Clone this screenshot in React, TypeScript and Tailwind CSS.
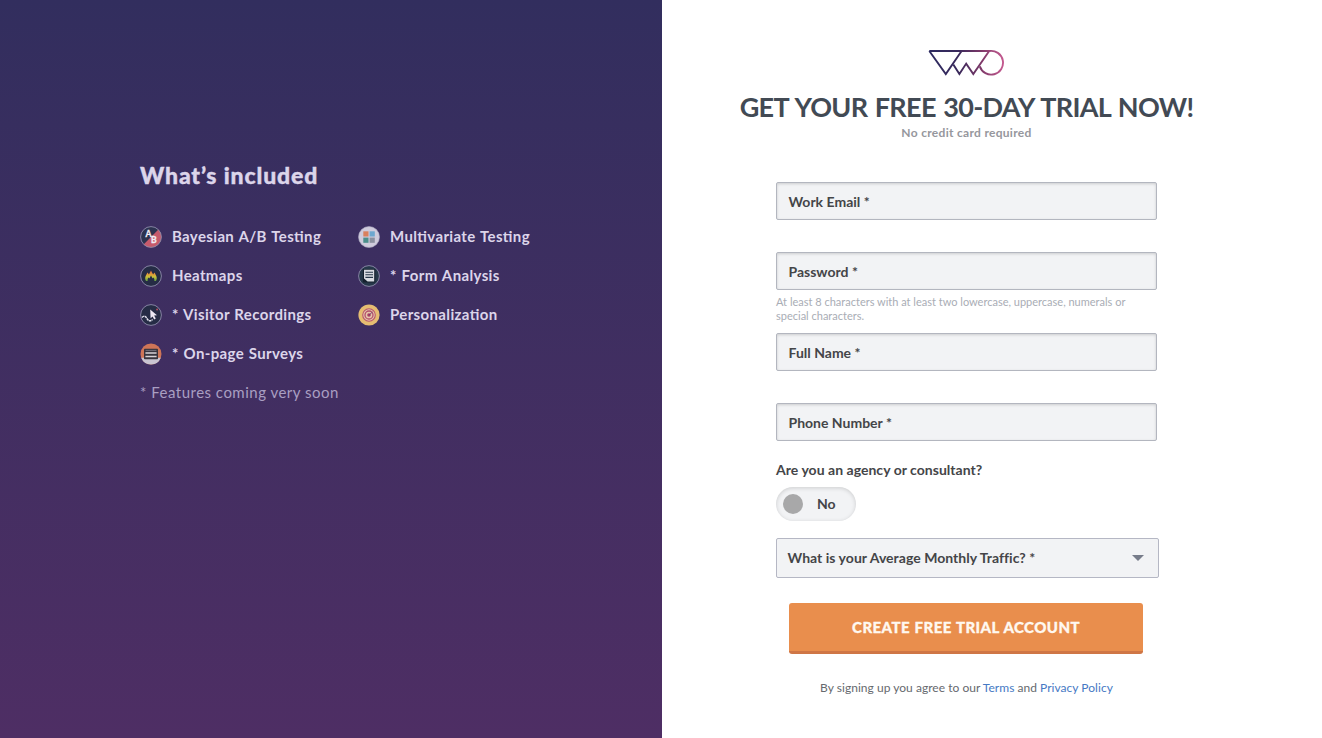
import type { ReactNode } from "react";

type FeatureProps = {
  icon: ReactNode;
  label: string;
};

const rim = "#8f8cab";

function AbIcon() {
  return (
    <svg viewBox="0 0 22 22" className="h-[22px] w-[22px] shrink-0">
      <circle cx="11" cy="11" r="10.4" fill="#2c3350" />
      <path d="M18.4 3.6A10.4 10.4 0 0 1 3.6 18.4Z" fill="#c65a6c" />
      <circle cx="11" cy="11" r="10.4" fill="none" stroke={rim} strokeWidth="0.9" />
      <text x="5.4" y="11" fontSize="8.6" fontWeight="700" fill="#f1eef7" stroke="#f1eef7" strokeWidth="0.3" fontFamily="Lato, sans-serif">
        A
      </text>
      <text x="10.9" y="16.5" fontSize="8.6" fontWeight="700" fill="#f1eef7" stroke="#f1eef7" strokeWidth="0.3" fontFamily="Lato, sans-serif">
        B
      </text>
    </svg>
  );
}

function HeatmapIcon() {
  return (
    <svg viewBox="0 0 22 22" className="h-[22px] w-[22px] shrink-0">
      <defs>
        <linearGradient id="flame" x1="0" y1="5.5" x2="0" y2="16" gradientUnits="userSpaceOnUse">
          <stop offset="0" stopColor="#cf5f45" />
          <stop offset="0.35" stopColor="#e39a38" />
          <stop offset="0.6" stopColor="#c9c23c" />
          <stop offset="1" stopColor="#5f9c45" />
        </linearGradient>
      </defs>
      <circle cx="11" cy="11" r="10.4" fill="#252c45" stroke={rim} strokeWidth="0.9" />
      <path
        d="M6 16C4.2 13 5.8 10.6 7.6 7.6L8.9 9.6 11 5.4 13.1 9.6 14.4 7.6C16.2 10.6 17.8 13 16 16H14.3C14.6 14.4 14.2 13.3 13.4 12.4L12.6 13.6 11 10.6 9.4 13.6 8.6 12.4C7.8 13.3 7.4 14.4 7.7 16Z"
        fill="url(#flame)"
      />
    </svg>
  );
}

function RecordingIcon() {
  return (
    <svg viewBox="0 0 22 22" className="h-[22px] w-[22px] shrink-0">
      <circle cx="11" cy="11" r="10.4" fill="#252c45" stroke={rim} strokeWidth="0.9" />
      <path
        d="M2 13.5C4 11.3 5.8 12 6.8 14.2 8.2 17.3 10.5 17.5 12.6 15.4"
        fill="none"
        stroke="#e4e2ee"
        strokeWidth="1.4"
        strokeDasharray="2.6 0.5"
      />
      <path d="M10.2 5.4 17 11.2 14.1 11.6 15.8 14.6 14.2 15.4 12.6 12.4 10.6 14.3Z" fill="#ebe8f3" />
      <circle cx="17.1" cy="5.4" r="1" fill="#b34b5f" />
    </svg>
  );
}

function SurveyIcon() {
  return (
    <svg viewBox="0 0 22 22" className="h-[22px] w-[22px] shrink-0">
      <circle cx="11" cy="11" r="10.5" fill="#ce7557" />
      <path d="M1.2 14.8H20.8A10.5 10.5 0 0 1 1.2 14.8Z" fill="#c9c4d1" />
      <rect x="4" y="5.8" width="14" height="10.4" rx="0.8" fill="#37343d" />
      <path d="M5.6 7.4H16.4" stroke="#8d8890" strokeWidth="0.7" />
      <path d="M5.4 10.1H16.6M5.4 13.6H16.6" stroke="#d8d2d6" strokeWidth="1.5" />
    </svg>
  );
}

function MultivariateIcon() {
  return (
    <svg viewBox="0 0 22 22" className="h-[22px] w-[22px] shrink-0">
      <circle cx="11" cy="11" r="10.5" fill="#cfcbdc" stroke="#aaa6c0" strokeWidth="0.6" />
      <rect x="5.3" y="5.3" width="5.2" height="5.2" fill="#d9805e" />
      <rect x="11.6" y="5.3" width="5.2" height="5.2" fill="#6da7cf" />
      <rect x="5.3" y="11.6" width="5.2" height="5.2" fill="#4b8f8c" />
      <rect x="11.6" y="11.6" width="5.2" height="5.2" fill="#8b909f" />
    </svg>
  );
}

function FormIcon() {
  return (
    <svg viewBox="0 0 22 22" className="h-[22px] w-[22px] shrink-0">
      <circle cx="11" cy="11" r="10.4" fill="#26384a" stroke={rim} strokeWidth="0.9" />
      <rect x="4.9" y="3.9" width="12.4" height="13.6" rx="0.8" fill="#14202d" />
      <path d="M6 4.8H16.2V16.6H9.6L6 13.6Z" fill="#d8dbe2" />
      <path d="M7.4 7.2H15M7.4 9.8H15M7.4 12.4H15" stroke="#26384a" strokeWidth="1.1" />
    </svg>
  );
}

function TargetIcon() {
  return (
    <svg viewBox="0 0 22 22" className="h-[22px] w-[22px] shrink-0">
      <circle cx="11" cy="11" r="10.6" fill="#e6bd72" />
      <circle cx="11" cy="11" r="6.3" fill="#e6c6ab" stroke="#b9566c" strokeWidth="1.1" />
      <circle cx="11" cy="11" r="4" fill="none" stroke="#b54f6a" strokeWidth="1.3" />
      <circle cx="11" cy="11" r="1.8" fill="#a83e63" />
      <path d="M11 11 14.5 8" stroke="#6b3f68" strokeWidth="0.8" />
    </svg>
  );
}

function Logo() {
  return (
    <svg viewBox="0 0 76 28" className="mr-px h-7 w-[76px]" fill="none">
      <defs>
        <linearGradient id="brand" x1="0" y1="0" x2="76" y2="0" gradientUnits="userSpaceOnUse">
          <stop offset="0" stopColor="#2d2b61" />
          <stop offset="0.4" stopColor="#39295b" />
          <stop offset="0.7" stopColor="#7d3868" />
          <stop offset="1" stopColor="#c65a90" />
        </linearGradient>
      </defs>
      <g stroke="url(#brand)" strokeWidth="1.9">
        <path d="M1.3 3H61.2L45.3 26 38.2 15.6 31.4 26 25.3 16.4" />
        <path d="M1.3 3 17.8 26 33.6 3" />
        <path d="M61.2 3A11.9 11.9 0 1 1 51.8 18.4" />
      </g>
    </svg>
  );
}

function Feature({ icon, label }: FeatureProps) {
  return (
    <li className="flex h-[39px] items-center gap-2.5">
      {icon}
      <span className="whitespace-nowrap text-[15px] font-bold tracking-[0.36px] [word-spacing:0.8px]">{label}</span>
    </li>
  );
}

function Field({ label }: { label: string }) {
  return (
    <div className="flex h-[38px] w-[381px] items-center rounded-[2px] border border-[#b3b6bf] bg-[#f2f3f5] pl-[11.5px] text-[14px] font-bold shadow-[inset_0_1px_3px_rgba(0,0,0,0.16)]">
      {label}
    </div>
  );
}

export default function App() {
  return (
    <main className="flex h-[738px] w-[1322px] overflow-hidden bg-white font-[Lato,sans-serif]">
      {/* features */}
      <section className="w-[662px] bg-linear-to-b from-[#322e5e] to-[#4e2e64] pt-[159px] pl-[140px] text-[#dcd5ea] [font-feature-settings:'liga'_1]">
        <h2 className="text-[23px] leading-8 font-black tracking-[0.86px] [-webkit-text-stroke:0.4px]">
          What’s included
        </h2>
        <div className="mt-[26px] flex">
          <ul className="w-[218px]">
            <Feature icon={<AbIcon />} label="Bayesian A/B Testing" />
            <Feature icon={<HeatmapIcon />} label="Heatmaps" />
            <Feature icon={<RecordingIcon />} label="* Visitor Recordings" />
            <Feature icon={<SurveyIcon />} label="* On-page Surveys" />
          </ul>
          <ul>
            <Feature icon={<MultivariateIcon />} label="Multivariate Testing" />
            <Feature icon={<FormIcon />} label="* Form Analysis" />
            <Feature icon={<TargetIcon />} label="Personalization" />
          </ul>
        </div>
        <p className="flex h-[39px] items-center text-[15px] tracking-[0.49px] text-[#a99fc2]">
          * Features coming very soon
        </p>
      </section>

      {/* sign up form */}
      <section className="flex flex-1 flex-col items-center pt-12 pr-[51px] text-[#444548]">
        <Logo />
        <h1 className="mt-[15px] whitespace-nowrap text-[27px] leading-8 font-bold tracking-[-0.65px] text-[#424a54] [word-spacing:1.4px]">
          GET YOUR FREE 30-DAY TRIAL NOW!
        </h1>
        <p className="mt-px text-[12px] leading-[18px] font-bold tracking-[0.3px] text-[#96979d]">
          No credit card required
        </p>

        <form className="mt-10 flex w-[381px] flex-col">
          <Field label="Work Email *" />
          <div className="mt-8">
            <Field label="Password *" />
          </div>
          <p className="mt-[5px] mb-[10px] text-[11px] leading-[14px] text-[#a9adb5]">
            At least 8 characters with at least two lowercase, uppercase, numerals or
            <br />
            special characters.
          </p>
          <Field label="Full Name *" />
          <div className="mt-8">
            <Field label="Phone Number *" />
          </div>

          <p className="mt-5 text-[14px] leading-[18px] font-bold tracking-[0.03px]">
            Are you an agency or consultant?
          </p>
          <div className="mt-2 flex h-[34px] w-20 items-center rounded-full bg-[#f2f3f5] pl-[7px] shadow-[inset_0_1px_4px_rgba(0,0,0,0.16)]">
            <span className="h-5 w-5 rounded-full bg-[#a8a8a9]" />
            <span className="ml-[14px] pb-px text-[14px] font-bold">No</span>
          </div>

          <div className="mt-[17px] flex h-10 w-[383px] items-center justify-between rounded-[2px] border border-[#b5b7c4] bg-[#f2f3f5] pr-[14px] pb-px pl-[10.5px] text-[14px] font-bold tracking-[0.03px]">
            What is your Average Monthly Traffic? *
            <svg viewBox="0 0 12 6" className="h-1.5 w-3">
              <path d="M0 0H12L6 6Z" fill="#777c8a" />
            </svg>
          </div>

          <button
            type="button"
            className="mt-[25px] ml-[13px] h-[51px] w-[354px] rounded-[3px] border-b-[3px] border-[#cf7646] bg-[#e98e4d] text-[15px] font-black tracking-[0.43px] text-[#fff8f0] [-webkit-text-stroke:0.3px] [word-spacing:0.6px]"
          >
            CREATE FREE TRIAL ACCOUNT
          </button>
        </form>

        <p className="mt-[25px] text-[12px] leading-[18px] tracking-[0.03px] text-[#66696e]">
          By signing up you agree to our <a className="text-[#4679c4]">Terms</a> and{" "}
          <a className="text-[#4679c4]">Privacy Policy</a>
        </p>
      </section>
    </main>
  );
}
